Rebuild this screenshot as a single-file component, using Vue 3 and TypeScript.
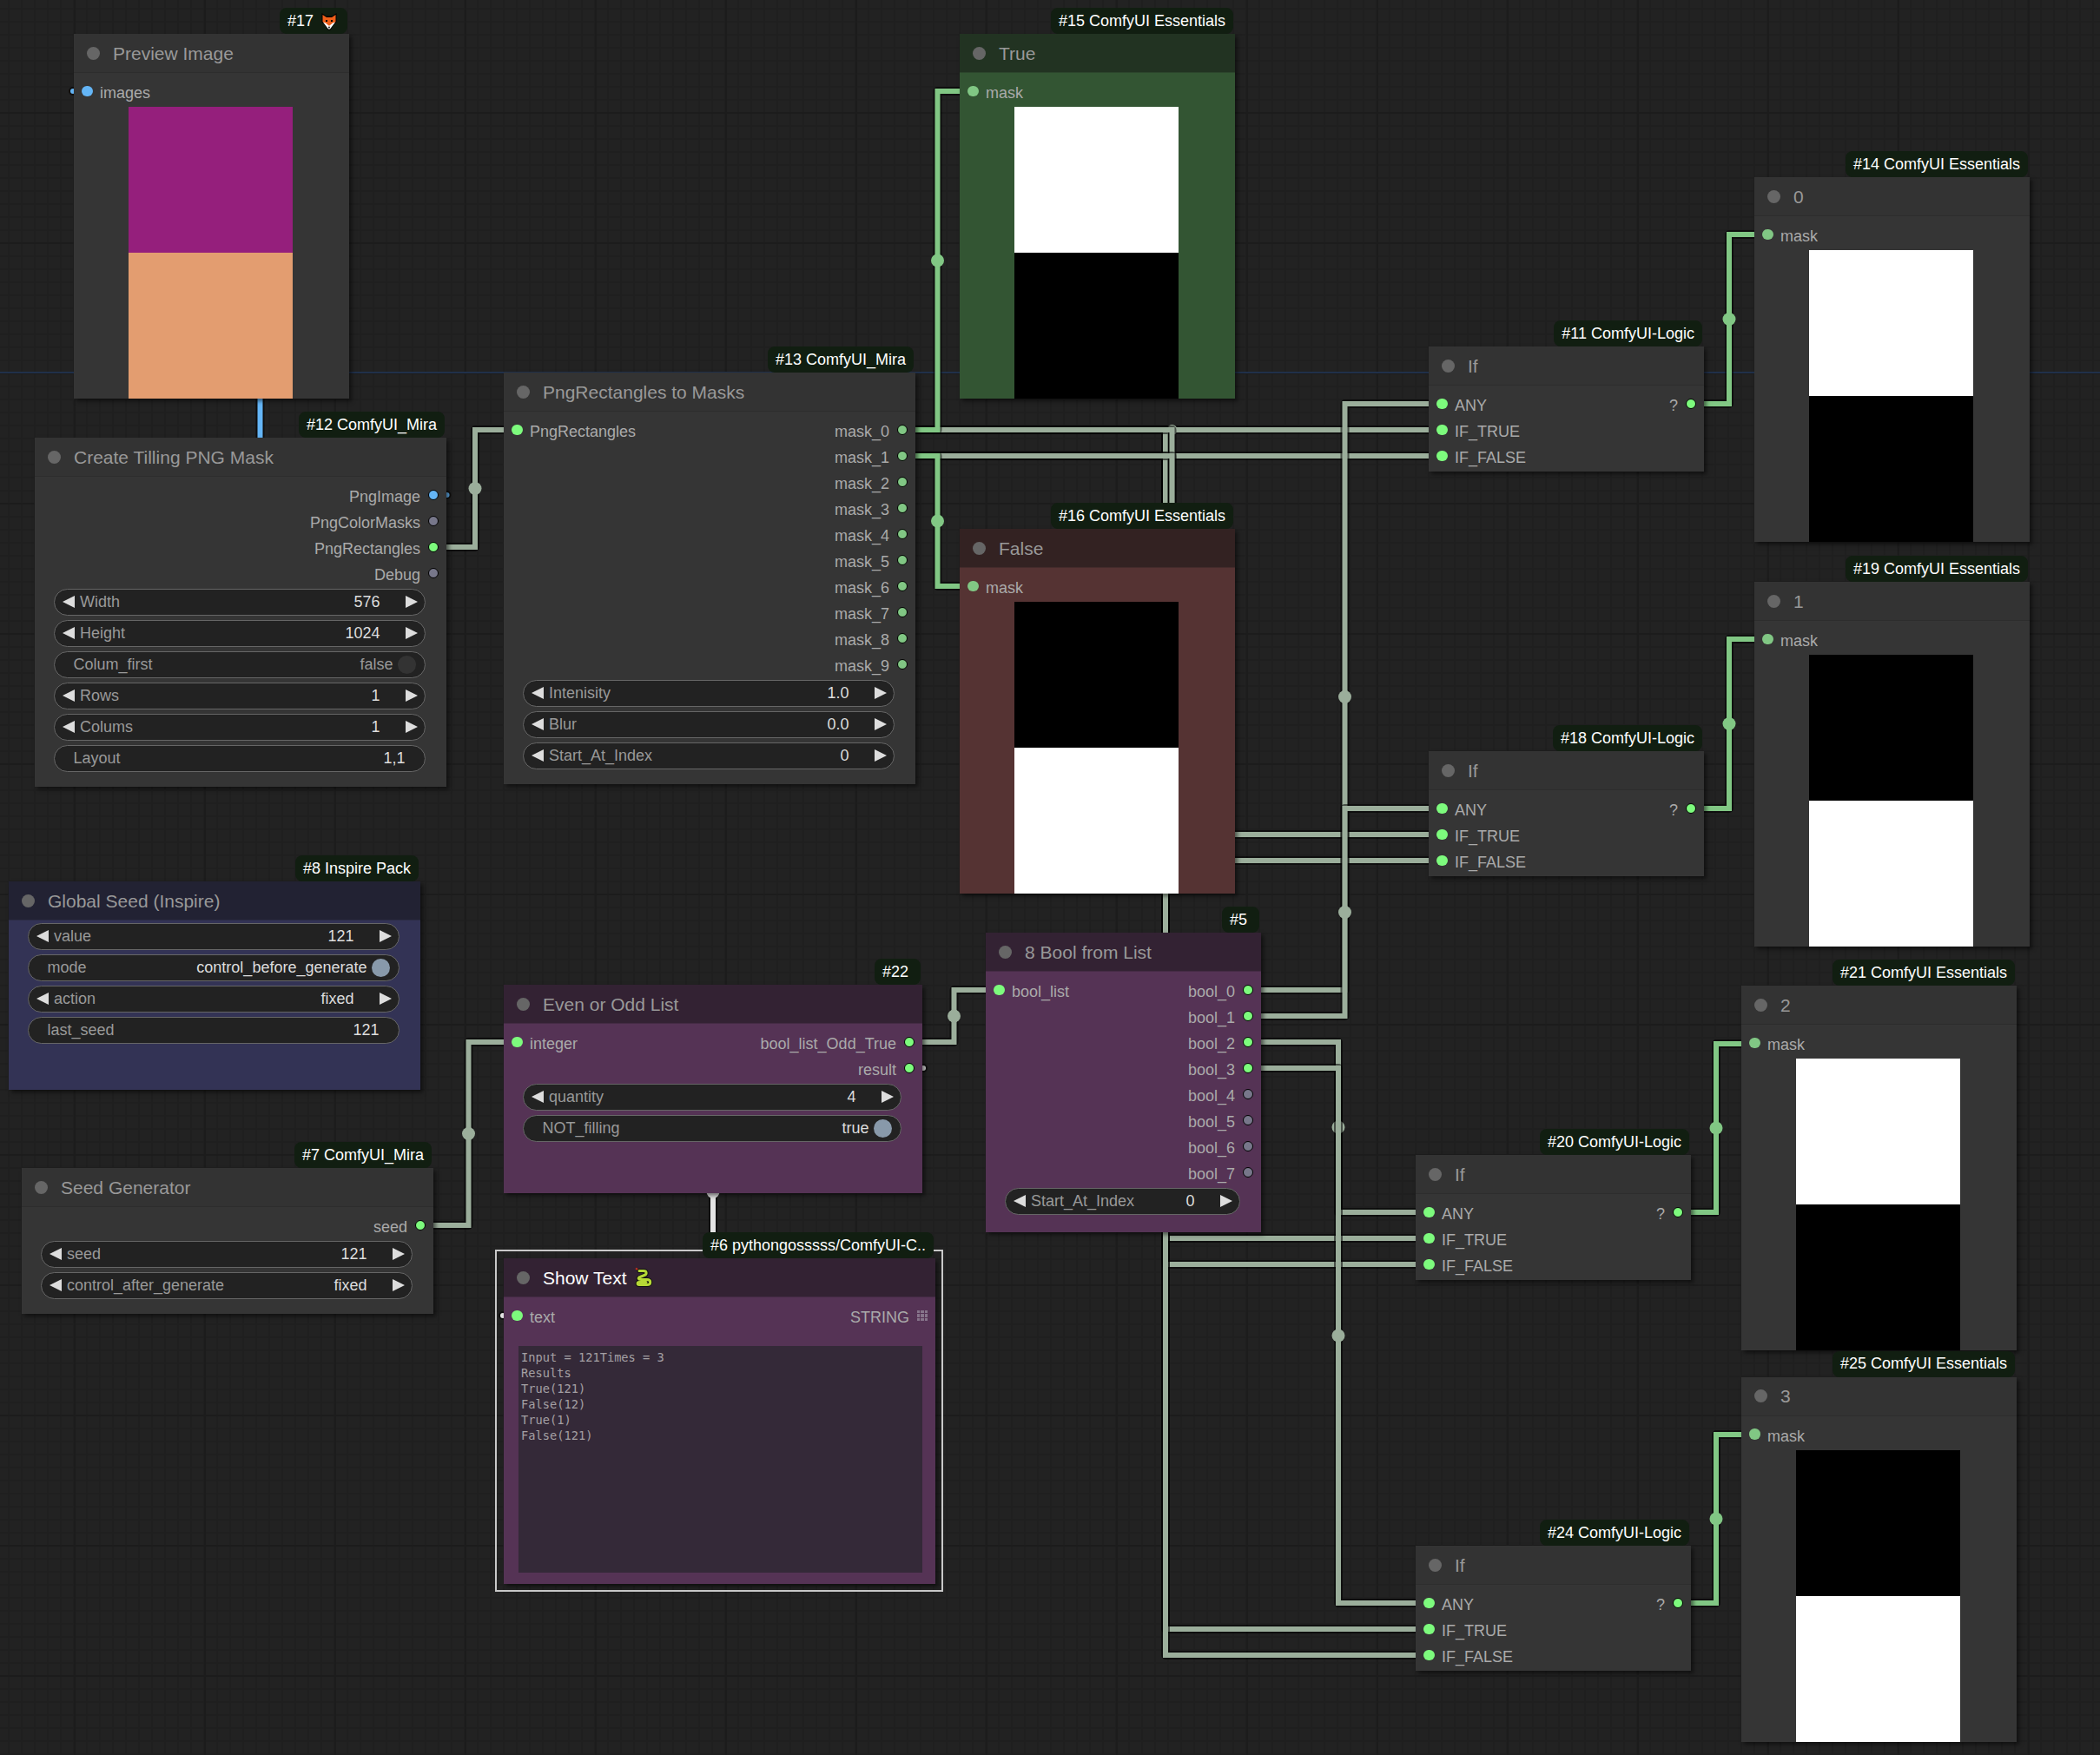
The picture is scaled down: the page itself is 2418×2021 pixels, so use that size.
<script setup lang="ts">
interface Port { name: string; color: string; grid?: boolean }
interface Widget { kind: 'num' | 'text' | 'toggle'; label: string; value: string; on?: boolean }
interface GraphNode {
  id: number; x: number; y: number; w: number; h: number; title: string; badge: string;
  theme: string; fox?: boolean; snake?: boolean; selected?: boolean;
  inputs: Port[]; outputs: Port[]; widgets: Widget[]; image?: [string, string]; text?: string;
}
const ANY = '#7dfb7d', MASK = '#81c784', IDLE = '#77778a', IMG = '#64b5f6';
const p = (name: string, color: string): Port => ({ name, color });
const num = (label: string, value: string): Widget => ({ kind: 'num', label, value });
const txt = (label: string, value: string): Widget => ({ kind: 'text', label, value });
const tog = (label: string, value: string, on: boolean): Widget => ({ kind: 'toggle', label, value, on });
const BLACK = '#000000', WHITE = '#ffffff';

const maskView = (id: number, x: number, y: number, title: string, badge: string, theme: string, image: [string, string]): GraphNode => ({
  id, x, y, w: 317, h: 420, title, badge, theme, inputs: [p('mask', MASK)], outputs: [], widgets: [], image,
});
const ifNode = (id: number, x: number, y: number): GraphNode => ({
  id, x, y, w: 317, h: 144, title: 'If', badge: `#${id} ComfyUI-Logic`, theme: 'plain',
  inputs: [p('ANY', ANY), p('IF_TRUE', ANY), p('IF_FALSE', ANY)], outputs: [p('?', ANY)], widgets: [],
});

const nodes: GraphNode[] = [
  { id: 17, x: 85, y: 39, w: 317, h: 420, title: 'Preview Image', badge: '#17 ', theme: 'plain', fox: true,
    inputs: [p('images', IMG)], outputs: [], widgets: [], image: ['#951f7c', '#e39d70'] },
  { id: 12, x: 40, y: 504, w: 474, h: 402, title: 'Create Tilling PNG Mask', badge: '#12 ComfyUI_Mira', theme: 'plain', inputs: [],
    outputs: [p('PngImage', IMG), p('PngColorMasks', IDLE), p('PngRectangles', ANY), p('Debug', IDLE)],
    widgets: [num('Width', '576'), num('Height', '1024'), tog('Colum_first', 'false', false), num('Rows', '1'), num('Colums', '1'), txt('Layout', '1,1')] },
  { id: 13, x: 580, y: 429, w: 474, h: 474, title: 'PngRectangles to Masks', badge: '#13 ComfyUI_Mira', theme: 'plain',
    inputs: [p('PngRectangles', ANY)],
    outputs: Array.from({ length: 10 }, (_, i) => p(`mask_${i}`, MASK)),
    widgets: [num('Intenisity', '1.0'), num('Blur', '0.0'), num('Start_At_Index', '0')] },
  maskView(15, 1105, 39, 'True', '#15 ComfyUI Essentials', 'green', [WHITE, BLACK]),
  maskView(16, 1105, 609, 'False', '#16 ComfyUI Essentials', 'red', [BLACK, WHITE]),
  maskView(14, 2020, 204, '0', '#14 ComfyUI Essentials', 'plain', [WHITE, BLACK]),
  maskView(19, 2020, 670, '1', '#19 ComfyUI Essentials', 'plain', [BLACK, WHITE]),
  maskView(21, 2005, 1135, '2', '#21 ComfyUI Essentials', 'plain', [WHITE, BLACK]),
  maskView(25, 2005, 1585.5, '3', '#25 ComfyUI Essentials', 'plain', [BLACK, WHITE]),
  ifNode(11, 1645, 399), ifNode(18, 1645, 865), ifNode(20, 1630, 1330), ifNode(24, 1630, 1780),
  { id: 8, x: 10, y: 1015, w: 474, h: 240, title: 'Global Seed (Inspire)', badge: '#8 Inspire Pack', theme: 'blue', inputs: [], outputs: [],
    widgets: [num('value', '121'), tog('mode', 'control_before_generate', true), num('action', 'fixed'), txt('last_seed', '121')] },
  { id: 7, x: 25, y: 1345, w: 474, h: 168, title: 'Seed Generator', badge: '#7 ComfyUI_Mira', theme: 'plain', inputs: [],
    outputs: [p('seed', ANY)], widgets: [num('seed', '121'), num('control_after_generate', 'fixed')] },
  { id: 22, x: 580, y: 1134, w: 482, h: 240, title: 'Even or Odd List', badge: '#22 ', theme: 'purple',
    inputs: [p('integer', ANY)], outputs: [p('bool_list_Odd_True', ANY), p('result', ANY)],
    widgets: [num('quantity', '4'), tog('NOT_filling', 'true', true)] },
  { id: 5, x: 1135, y: 1074, w: 317, h: 345, title: '8 Bool from List', badge: '#5 ', theme: 'purple',
    inputs: [p('bool_list', ANY)],
    outputs: Array.from({ length: 8 }, (_, i) => p(`bool_${i}`, i < 4 ? ANY : IDLE)),
    widgets: [num('Start_At_Index', '0')] },
  { id: 6, x: 580, y: 1449, w: 497, h: 375, title: 'Show Text', badge: '#6 pythongosssss/ComfyUI-C..', theme: 'purple', snake: true, selected: true,
    inputs: [p('text', ANY)], outputs: [{ name: 'STRING', color: IDLE, grid: true }], widgets: [],
    text: 'Input = 121Times = 3\nResults\nTrue(121)\nFalse(12)\nTrue(1)\nFalse(121)' },
];

interface Link { from: [number, number]; to: [number, number]; color: string; r: number }
const GRAY = '#9bae9b', GREEN = '#81c784', BLUE = '#64b5f6', LIGHT = '#e4e4e4';
const l = (a: number, b: number, c: number, d: number, color: string, r = 7.5): Link => ({ from: [a, b], to: [c, d], color, r });
const links: Link[] = [
  l(1039, 495, 1660, 495, GRAY, 6),
  l(1039, 525, 1660, 525, GRAY, 4),
  l(499, 570, 100, 105, BLUE),
  l(499, 630, 595, 495, GRAY),
  l(484, 1411, 595, 1200, GRAY),
  l(1047, 1200, 1150, 1140, GRAY),
  l(1047, 1230, 595, 1515, LIGHT),
  l(1039, 495, 1645, 1426, GRAY),
  l(1039, 525, 1645, 1456, GRAY),
  l(1039, 495, 1645, 1876, GRAY),
  l(1039, 525, 1645, 1906, GRAY),
  l(1039, 495, 1660, 961, GRAY),
  l(1039, 525, 1660, 991, GRAY),
  l(1039, 495, 1120, 105, GREEN),
  l(1039, 525, 1120, 675, GREEN),
  l(1437, 1140, 1660, 465, GRAY),
  l(1437, 1170, 1660, 931, GRAY),
  l(1437, 1200, 1645, 1396, GRAY),
  l(1437, 1230, 1645, 1846, GRAY),
  l(1947, 465, 2035, 270, GREEN),
  l(1947, 931, 2035, 736, GREEN),
  l(1932, 1396, 2020, 1202, GREEN),
  l(1932, 1846, 2020, 1652, GREEN),
];
const stubs = [
  { x: 514.5, y: 570, color: BLUE },
  { x: 84, y: 105, color: BLUE },
  { x: 1063, y: 1230, color: LIGHT },
  { x: 579, y: 1515, color: LIGHT },
];
const wirePath = (k: Link): string => {
  const [a, b] = k.from;
  const [c, d] = k.to;
  return `M${a} ${b}H${(a + c) / 2}V${d}H${c}`;
};
const midX = (k: Link): number => (k.from[0] + k.to[0]) / 2;
const midY = (k: Link): number => (k.from[1] + k.to[1]) / 2;
</script>

<template>
  <div class="canvas">
    <svg class="wires" width="2418" height="2021" viewBox="0 0 2418 2021">
      <g v-for="(k, i) in links" :key="i">
        <path class="wire-under" :d="wirePath(k)" />
        <path class="wire-core" :d="wirePath(k)" :stroke="k.color" />
        <circle :cx="midX(k)" :cy="midY(k)" :r="k.r" :fill="k.color" />
      </g>
      <g v-for="s in stubs" :key="s.x">
        <circle :cx="s.x" :cy="s.y" r="5" fill="#000" fill-opacity="0.55" />
        <circle :cx="s.x" :cy="s.y" r="3" :fill="s.color" />
      </g>
    </svg>

    <section
      v-for="n in nodes"
      :key="n.id"
      class="node"
      :class="[n.theme, { selected: n.selected, bare: !n.inputs.length && !n.outputs.length }]"
      :style="{ left: n.x + 'px', top: n.y + 'px', width: n.w + 'px', height: n.h + 'px' }"
    >
      <div class="badge">
        <span class="badge-text">{{ n.badge }}</span>
        <svg v-if="n.fox" class="fox" viewBox="0 0 18 20" width="18" height="20">
          <path d="M0.5 0L5.5 3.5H12.5L17.5 0V10.5L14 14L10.5 19.5H7.5L4 14L0.5 10.5Z" fill="#000" />
          <path d="M1.5 2L6 5H12L16.5 2V10L13 13L10 15H8L5 13L1.5 10Z" fill="#ee5f1a" />
          <path d="M2 10.5L5 11.5L8.5 14.5H9.5L13 11.5L16 10.5L13 14.5L10 18.5H8L5 14.5Z" fill="#fff" />
          <path d="M7.8 15.8H10.2L9 18Z" fill="#000" />
          <rect x="5" y="8" width="2" height="2" fill="#000" />
          <rect x="11" y="8" width="2" height="2" fill="#000" />
        </svg>
      </div>

      <header class="title">
        <i class="title-dot"></i>
        <span class="title-text">{{ n.title }}</span>
        <svg v-if="n.snake" class="snake" viewBox="0 0 21 24" width="21" height="24">
          <path d="M1 1.5L4 3.5" stroke="#c8321e" stroke-width="2" fill="none" />
          <path class="snake-line out" d="M5 4.5H10C14 4.5 14 8.5 11 9.5L6 11.5C3 12.5 4 14.5 7 14.5H14C19 14.5 19 20.5 14 20.5H5C2.5 20.5 2.5 17.5 5 17.5H13" />
          <path class="snake-line in" d="M5 4.5H10C14 4.5 14 8.5 11 9.5L6 11.5C3 12.5 4 14.5 7 14.5H14C19 14.5 19 20.5 14 20.5H5C2.5 20.5 2.5 17.5 5 17.5H13" />
        </svg>
      </header>

      <div class="body">
        <div v-if="n.inputs.length || n.outputs.length" class="ports">
          <div class="port-col">
            <div v-for="s in n.inputs" :key="s.name" class="port">
              <i class="dot" :style="{ background: s.color }"></i>
              <span class="port-label">{{ s.name }}</span>
            </div>
          </div>
          <div class="port-col right">
            <div v-for="s in n.outputs" :key="s.name" class="port">
              <span class="port-label">{{ s.name }}</span>
              <span v-if="s.grid" class="grip"><b v-for="c in 9" :key="c"></b></span>
              <i v-else class="dot ring" :style="{ background: s.color }"></i>
            </div>
          </div>
        </div>

        <div v-if="n.widgets.length" class="widgets">
          <div v-for="w in n.widgets" :key="w.label" class="widget" :class="w.kind">
            <i v-if="w.kind === 'num'" class="arrow left"></i>
            <span class="w-label">{{ w.label }}</span>
            <span class="w-value">{{ w.value }}</span>
            <i v-if="w.kind === 'num'" class="arrow right"></i>
            <i v-if="w.kind === 'toggle'" class="knob" :class="{ on: w.on }"></i>
          </div>
        </div>

        <div v-if="n.image" class="preview">
          <div :style="{ background: n.image[0] }"></div>
          <div :style="{ background: n.image[1] }"></div>
        </div>

        <div v-if="n.text" class="textbox">{{ n.text }}</div>
      </div>
    </section>
  </div>
</template>

<style>
html, body { margin: 0; background: #222; }
</style>

<style scoped>
.canvas {
  position: relative;
  width: 2418px;
  height: 2021px;
  overflow: hidden;
  font-family: "Liberation Sans", Arial, sans-serif;
  background-color: #222;
  background-image:
    linear-gradient(#20304a, #20304a),
    linear-gradient(#1c1c1c 2px, transparent 2px),
    linear-gradient(90deg, #1c1c1c 2px, transparent 2px),
    linear-gradient(#1f1f1f 2px, transparent 2px),
    linear-gradient(90deg, #1f1f1f 2px, transparent 2px);
  background-size: 100% 2px, 150px 150px, 150px 150px, 15px 15px, 15px 15px;
  background-position: 0 428px, 0 129px, 85px 0, 0 9px, 9px 0;
  background-repeat: no-repeat, repeat, repeat, repeat, repeat;
}
.wires { position: absolute; left: 0; top: 0; }
.wire-under { fill: none; stroke: rgba(0, 0, 0, 0.55); stroke-width: 10px; stroke-linejoin: round; }
.wire-core { fill: none; stroke-width: 6px; }

.node {
  position: absolute;
  display: flex;
  flex-direction: column;
  box-sizing: border-box;
  background: #353535;
  box-shadow: 3px 3px 4.5px rgba(0, 0, 0, 0.5);
  color: #aaa;
}
.node.green { background: #335533; }
.node.red { background: #553333; }
.node.blue { background: #333355; }
.node.purple { background: #553355; }
.node.selected::before {
  content: "";
  position: absolute;
  left: -10px;
  right: -9px;
  top: -10px;
  bottom: -9px;
  border: 2px solid #c8c8c8;
  box-sizing: border-box;
  pointer-events: none;
}

.badge {
  position: absolute;
  z-index: 2;
  right: 2px;
  bottom: 100%;
  height: 30px;
  display: flex;
  align-items: center;
  padding: 0 9px;
  border-radius: 8px;
  background: #111e11;
  color: #fff;
  font-size: 18px;
  white-space: pre;
}
.fox { margin: 1px 3px 0 4px; }

.title {
  position: relative;
  flex: none;
  display: flex;
  align-items: center;
  height: 45px;
  padding-left: 15px;
  box-sizing: border-box;
  background: #333;
  border-bottom: 1.5px solid #2d2d2d;
  color: #999;
  font-size: 21px;
}
.green .title { background: #223322; border-bottom-color: #2c452c; }
.red .title { background: #332222; border-bottom-color: #442b2b; }
.blue .title { background: #222233; border-bottom-color: #2b2b44; }
.purple .title { background: #332233; border-bottom-color: #442b44; }
.selected .title { color: #fff; }
.title-dot { width: 15px; height: 15px; border-radius: 50%; background: #666; margin-right: 15px; }
.title-text { line-height: 44px; height: 43px; }
.snake { margin-left: 9px; }
.snake-line { fill: none; stroke-linejoin: round; stroke-linecap: round; }
.snake-line.out { stroke: #111; stroke-width: 5px; }
.snake-line.in { stroke: #b7d936; stroke-width: 3px; }

.body { flex: 1; display: flex; flex-direction: column; min-height: 0; padding-top: 6px; }
.bare .body { padding-top: 0; }

.ports { display: flex; justify-content: space-between; flex: none; }
.port-col { display: flex; flex-direction: column; }
.port-col.right { align-items: flex-end; }
.port {
  display: flex;
  align-items: center;
  height: 30px;
  padding: 0 9px;
  gap: 8.5px;
}
.port-label { font-size: 18px; line-height: 34px; height: 30px; white-space: pre; }
.dot { width: 12.5px; height: 12.5px; border-radius: 50%; box-sizing: border-box; flex: none; }
.dot.ring { border: 1.5px solid #000; }
.grip {
  display: grid;
  grid-template-columns: repeat(3, 3.5px);
  grid-auto-rows: 3.5px;
  gap: 1px;
  width: 12.5px;
}
.grip b { background: #86748a; }

.widgets {
  display: flex;
  flex-direction: column;
  gap: 5px;
  margin: 2.5px 24px 0 22px;
  flex: none;
}
.widget {
  display: flex;
  align-items: center;
  height: 31px;
  box-sizing: border-box;
  border: 1.5px solid #666;
  border-radius: 16px;
  background: #222;
  font-size: 18px;
  color: #999;
  padding: 0 22.5px 0 21.5px;
  white-space: pre;
}
.widget.num { padding: 0 8.5px; }
.widget.toggle { padding: 0 10px 0 21.5px; }
.w-label { flex: 1; min-width: 0; }
.w-value { color: #ddd; }
.widget.num .w-label { margin-left: 6.5px; }
.widget.num .w-value { margin-right: 29px; }
.arrow { width: 0; height: 0; border-top: 7.5px solid transparent; border-bottom: 7.5px solid transparent; flex: none; }
.arrow.left { border-right: 14px solid #ddd; }
.arrow.right { border-left: 14px solid #ddd; }
.knob { width: 21px; height: 21px; border-radius: 50%; background: #333; margin-left: 5.5px; flex: none; }
.knob.on { background: #8899aa; }
.widget.toggle:has(.knob:not(.on)) .w-value { color: #999; }

.preview {
  flex: none;
  display: flex;
  flex-direction: column;
  width: 189px;
  height: 336px;
  margin: 3px 0 0 63px;
}
.preview div { flex: 1; }

.textbox {
  flex: none;
  height: 261px;
  margin: 20px 15px 0 17px;
  padding: 4px 3px 3px;
  box-sizing: border-box;
  background: #342938;
  color: #a4a0a4;
  font-family: "DejaVu Sans Mono", monospace;
  font-size: 13.7px;
  line-height: 18px;
  white-space: pre;
  overflow: hidden;
}
</style>
